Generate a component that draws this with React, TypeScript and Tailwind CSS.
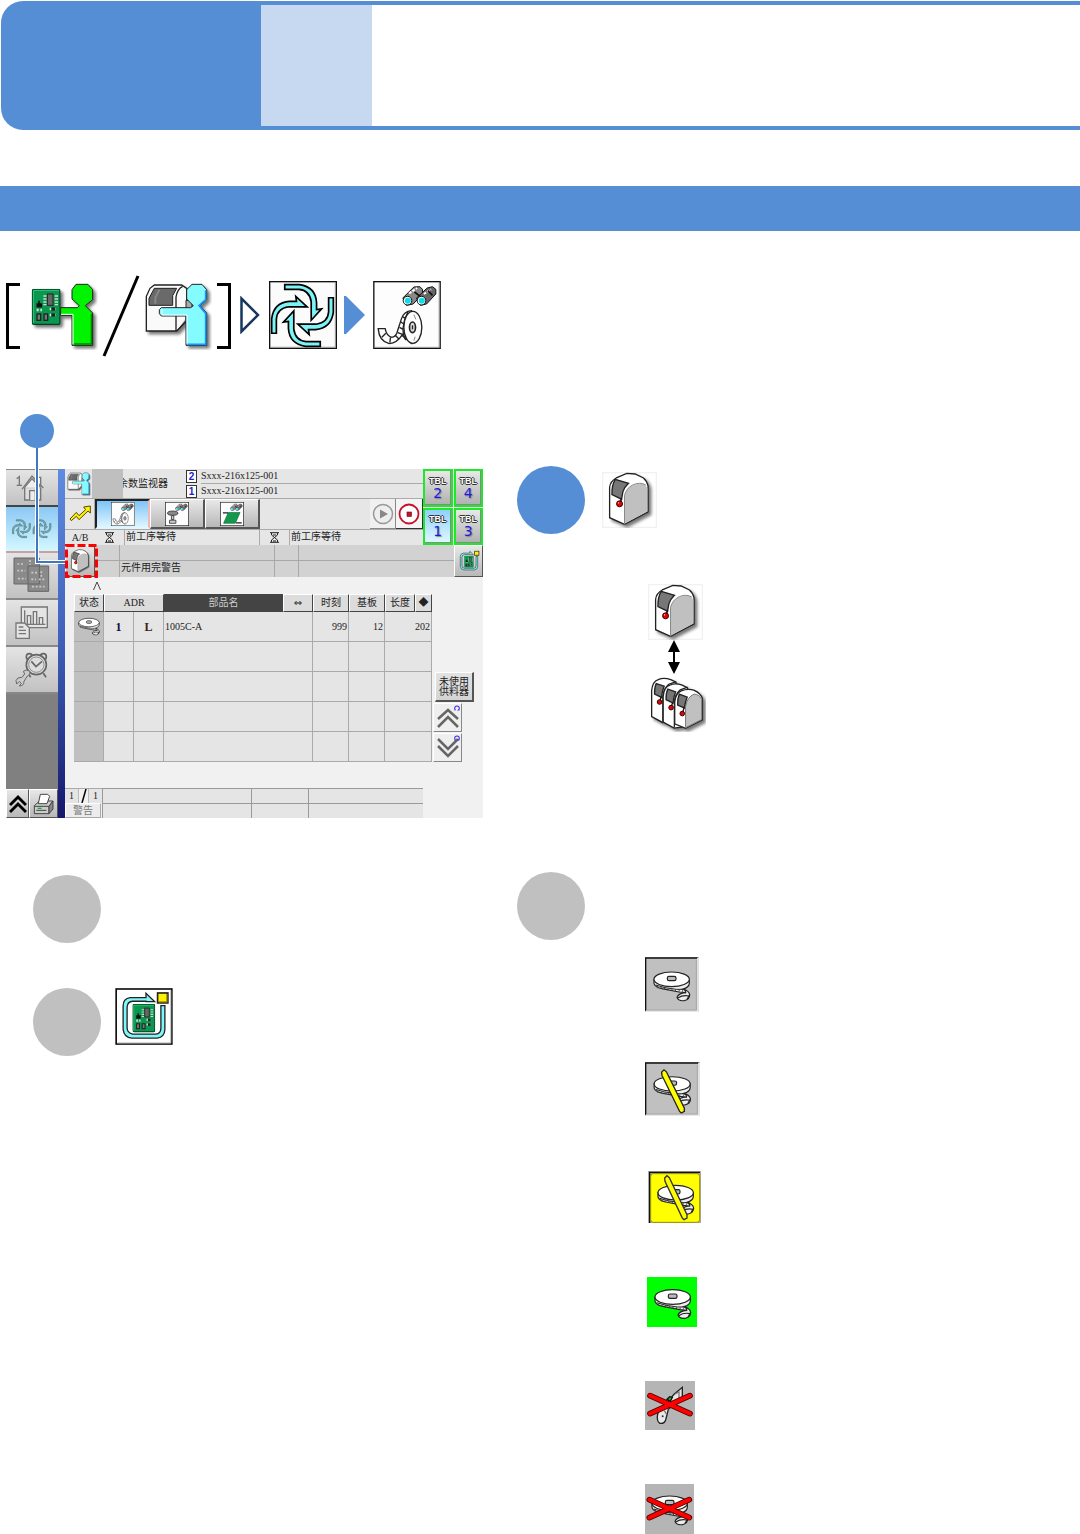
import type { ReactNode } from "react";

const bevel =
  "flex items-center justify-center border border-t-white border-l-white border-r-[#555] border-b-[#555] bg-gradient-to-b";
const bevelGray = `${bevel} from-[#e8e8e8] to-[#b8b8b8]`;
const softShadow = "[filter:drop-shadow(8px_8px_5px_#0008)]";

function Board({ x, y, w, h }: { x: number; y: number; w: number; h: number }) {
  return (
    <svg x={x} y={y} width={w} height={h} viewBox="0 0 87 109" preserveAspectRatio="none">
      <rect x="2" y="2" width="83" height="105" rx="5" fill="#0a9850" stroke="#024023" strokeWidth="4" />
      <path d="M5 104V5H82" fill="none" stroke="#34c67c" strokeWidth="3" />
      <path d="M35 22h44M35 31h44M35 40h44M35 48h44" stroke="#d5d5d5" strokeWidth="4" strokeDasharray="10 24" />
      <rect x="47" y="16" width="17" height="34" fill="#666" stroke="#222" strokeWidth="3" />
      <path d="M22 36v12M17 46h12v8H17z" stroke="#111" strokeWidth="5" fill="#111" />
      <path d="M15 64h16M54 61h22M54 79h22" stroke="#ddd" strokeWidth="8" strokeDasharray="6 5" />
      <rect x="59" y="56" width="11" height="10" fill="#222" />
      <rect x="59" y="74" width="11" height="10" fill="#222" />
      <rect x="16" y="76" width="11" height="19" fill="#777" stroke="#222" strokeWidth="4" />
      <rect x="37" y="76" width="11" height="19" fill="#777" stroke="#222" strokeWidth="4" />
    </svg>
  );
}

function BoardOperator({ className }: { className: string }) {
  return (
    <svg className={className} viewBox="90 55 204 204" aria-hidden="true">
      <g className={softShadow}>
        <Board x={95} y={75} w={87} h={109} />
        <path d="M228 62H264L278 78V108L256 126L278 148V245H216V155H182V132H232L238 126L216 106V78Z" fill="#00f400" stroke="#222" strokeWidth="3" />
        <path d="M219 242V152H183" fill="none" stroke="#fff" strokeWidth="3" />
        <path d="M274 150V241H222" fill="none" stroke="#008a00" strokeWidth="4" />
      </g>
    </svg>
  );
}

function MachineOperator({ className }: { className: string }) {
  return (
    <svg className={className} viewBox="432 55 204 204" aria-hidden="true">
      <g className={softShadow}>
        <path d="M439 202V98L450 74L463 64H545L560 74V172L530 202Z" fill="#fafafa" stroke="#222" strokeWidth="4" />
        <path d="M463 74H530L518 96V125H447V104Z" fill="#6a6a6a" stroke="#222" strokeWidth="3" />
        <path d="M478 78L466 102V120" fill="none" stroke="#888" strokeWidth="6" />
        <path d="M528 202V100Q532 76 548 68" fill="none" stroke="#222" strokeWidth="4" />
        <path d="M530 202L558 170V110H576V140" fill="#aaa" stroke="#222" strokeWidth="3" />
        <path d="M576 62H606L620 78V108L600 126L620 148V245H558V157H484L478 150V138L484 132H572L580 126L560 106V78Z" fill="#84fbff" stroke="#222" strokeWidth="3" />
      </g>
      <path d="M617 80V108L597 126L617 149V242H562" fill="none" stroke="#1595ff" strokeWidth="5" />
      <path d="M561 240V154H486V136" fill="none" stroke="#fff" strokeWidth="3" />
    </svg>
  );
}

const arrow = "M194 57H238Q286 64 289 110V131L304 129L273 163V108Q268 73 236 71H194Z";

function Swirl({ fill = "#7df3f5", stroke = "#000" }: { fill?: string; stroke?: string }) {
  return (
    <g fill={fill} stroke={stroke} strokeWidth="5">
      <path d={arrow} />
      <path d={arrow} transform="rotate(90 247 149)" />
      <path d={arrow} transform="rotate(180 247 149)" />
      <path d={arrow} transform="rotate(270 247 149)" />
    </g>
  );
}

function SwirlTile({ className }: { className: string }) {
  return (
    <svg className={className} viewBox="147 46 203 203" aria-hidden="true">
      <rect x="149" y="48" width="199" height="199" fill="#fbfbfb" stroke="#111" strokeWidth="4" />
      <path d="M152 244H345V51" fill="none" stroke="#999" strokeWidth="3" />
      <Swirl />
    </svg>
  );
}

function Binoculars() {
  return (
    <g stroke="#111" strokeWidth="3">
      <path d="M549 96L582 63L600 62L608 70V84L580 114L560 118Z" fill="#888" />
      <path d="M590 96L622 66L638 62L648 70V84L620 114L602 118Z" fill="#666" />
      <path d="M568 82L592 66M612 84L634 70" stroke="#fff" strokeWidth="6" strokeDasharray="8 4" />
      <path d="M584 78L602 92M624 74L638 88" strokeWidth="5" />
      <circle cx="563" cy="104" r="13" fill="#fff" />
      <circle cx="605" cy="104" r="13" fill="#fff" />
      <circle cx="564" cy="104" r="9" fill="#11dbe6" stroke="none" />
      <circle cx="606" cy="104" r="9" fill="#11dbe6" stroke="none" />
    </g>
  );
}

function ReelTile({ className }: { className: string }) {
  return (
    <svg className={className} viewBox="460 45 203 204" aria-hidden="true">
      <rect x="462" y="47" width="199" height="200" fill="#fdfdfd" stroke="#111" strokeWidth="4" />
      <path d="M465 244H658V50" fill="none" stroke="#999" strokeWidth="3" />
      <Binoculars />
      <path d="M575 134Q552 136 545 158L534 192Q530 212 516 214Q500 210 496 188H475Q478 226 508 233Q532 230 546 208L575 232Z" fill="#fff" stroke="#222" strokeWidth="4" />
      <path d="M564 138Q552 160 550 184T558 222M548 152L558 158M543 168L552 174M539 184L550 190M534 200L550 206M526 208L538 220M512 214L510 230M498 202L486 214" fill="none" stroke="#222" strokeWidth="4" />
      <ellipse cx="579" cy="184" rx="27" ry="48" fill="#fff" stroke="#222" strokeWidth="4" />
      <ellipse cx="578" cy="184" rx="9" ry="16" fill="#ddd" stroke="#222" strokeWidth="5" />
      <path d="M578 178v12" stroke="#222" strokeWidth="4" />
      <path d="M582 146l6 14M586 212l-4 12" stroke="#888" strokeWidth="3" />
    </svg>
  );
}

function NozzleTile({ className }: { className: string }) {
  return (
    <svg className={className} viewBox="460 45 203 204" aria-hidden="true">
      <rect x="462" y="47" width="199" height="200" fill="#fdfdfd" stroke="#111" strokeWidth="6" />
      <Binoculars />
      <ellipse cx="525" cy="140" rx="44" ry="18" fill="#888" stroke="#333" strokeWidth="7" />
      <path d="M514 160h20v34h-20zM498 200h54v26h-54z" fill="#ccc" stroke="#333" strokeWidth="7" />
    </svg>
  );
}

function BeltTile({ className }: { className: string }) {
  return (
    <svg className={className} viewBox="460 45 203 204" aria-hidden="true">
      <rect x="462" y="47" width="199" height="200" fill="#fdfdfd" stroke="#111" strokeWidth="6" />
      <Binoculars />
      <path d="M530 134H630L590 226H490Z" fill="#13984c" stroke="#085c2c" strokeWidth="5" />
      <path d="M484 138h44M596 222h48" stroke="#222" strokeWidth="10" />
    </svg>
  );
}

function Machine({ className, framed = false }: { className: string; framed?: boolean }) {
  return (
    <svg className={className} viewBox="275 38 166 169" aria-hidden="true">
      {framed && <rect x="277" y="40" width="162" height="165" fill="#fff" stroke="#f1f1f1" strokeWidth="4" />}
      <path className={softShadow} d="M298 176V84Q300 66 318 56L350 42L375 44L400 56Q410 64 414 80V158L343 196Z" fill="#fff" stroke="#222" strokeWidth="4" />
      <path d="M343 194V110Q348 86 368 78Q394 68 404 76L412 86V157Z" fill="#c0c0c0" />
      <path d="M343 196V108Q350 86 366 78Q390 66 408 78" fill="none" stroke="#888" strokeWidth="3" />
      <path d="M315 60L355 72Q342 84 338 98L334 120L305 106Q304 78 315 60Z" fill="#777" stroke="#222" strokeWidth="4" />
      <path d="M334 118l-4 12" stroke="#111" strokeWidth="5" />
      <circle cx="328" cy="134" r="9" fill="#e80000" stroke="#300" strokeWidth="3" />
      <circle cx="325" cy="131" r="2" fill="#fff" />
    </svg>
  );
}

function MachineLine({ className }: { className: string }) {
  const unit = (dx: number, dy: number) => (
    <g transform={`translate(${dx} ${dy})`}>
      <path d="M424 768V690Q426 662 444 656Q460 648 482 656L498 664L500 780L457 786Z" fill="#fff" stroke="#222" strokeWidth="4" />
      <path d="M458 784V708Q460 684 476 670L498 662" fill="none" stroke="#222" strokeWidth="4" />
      <path d="M438 668L462 676Q456 690 454 710L433 700Q432 680 438 668Z" fill="#777" stroke="#222" strokeWidth="4" />
      <path d="M453 708l-4 12" stroke="#111" strokeWidth="4" />
      <circle cx="448" cy="724" r="7" fill="#e80000" stroke="#300" strokeWidth="3" />
    </g>
  );
  return (
    <svg className={className} viewBox="420 645 168 170" aria-hidden="true">
      <g className={softShadow}>
        {unit(0, 0)}
        {unit(35, 17)}
        <path d="M494 790V724Q496 698 514 690Q534 682 552 688Q574 698 578 714V778L527 804Z" fill="#fff" stroke="#222" strokeWidth="4" />
      </g>
      <path d="M527 802V738Q532 708 553 700Q570 701 576 716V777Z" fill="#c0c0c0" stroke="#777" strokeWidth="3" />
      <path d="M508 700L532 709Q526 724 523 742L503 733Q502 714 508 700Z" fill="#777" stroke="#222" strokeWidth="4" />
      <path d="M522 742l-3 12" stroke="#111" strokeWidth="4" />
      <circle cx="517" cy="759" r="7" fill="#e80000" stroke="#300" strokeWidth="3" />
    </svg>
  );
}

// Reel lying flat, with the tape curling off to the lower right
function FlatReel() {
  return (
    <g stroke="#222" strokeWidth="3.5">
      <path d="M-53 0V13Q-50 24 -30 28L22 38L42 40Q20 42 16 54Q20 66 38 64Q54 60 54 46Q52 34 34 29Q52 24 53 12V0Z" fill="#eee" />
      <path d="M18 56Q34 46 52 50M36 30Q44 34 42 42M54 46L46 60" fill="none" />
      <path d="M-48 17L-20 25L14 30L36 30" fill="none" strokeWidth="3" />
      <path d="M-44 23L-20 28L14 34L34 35" fill="none" stroke="#444" strokeWidth="6" strokeDasharray="3 8" />
      <ellipse rx="53" ry="22" fill="#fff" />
      <rect x="-13" y="-9" width="26" height="13" rx="5" fill="#bbb" />
    </g>
  );
}

const slash = "M-31 -36L-24 -43L-17 -37L36 74L36 84L27 89L22 84L-30 -26Z";

function Cross() {
  return (
    <g>
      <path d="M-60 -26L60 28M60 -26L-60 28" stroke="#4a0000" strokeWidth="17" strokeLinecap="round" />
      <path d="M-60 -26L60 28M60 -26L-60 28" stroke="#f00" strokeWidth="12" strokeLinecap="round" />
    </g>
  );
}

function SunkenTile({ className, children }: { className: string; children: ReactNode }) {
  return (
    <svg className={className} viewBox="45 21 162 165" preserveAspectRatio="none" aria-hidden="true">
      <rect x="45" y="21" width="162" height="165" fill="#c0c0c0" />
      <path d="M47 183V24H203" fill="none" stroke="#111" strokeWidth="4" />
      <path d="M47 184H204V24" fill="none" stroke="#e8e8e8" strokeWidth="5" />
      <path d="M51 180H199V30" fill="none" stroke="#999" strokeWidth="2" />
      <g transform="translate(125 88)">{children}</g>
    </svg>
  );
}

function ReelStates() {
  return (
    <div className="mt-[17px] ml-[128px] flex flex-col items-start gap-[55px]">
      <div className="flex flex-col items-start gap-[50px]">
        <SunkenTile className="h-[55px] w-[54px]">
          <FlatReel />
        </SunkenTile>
        <SunkenTile className="h-[54px] w-[55px]">
          <FlatReel />
          <path d={slash} fill="#ff0" stroke="#222" strokeWidth="4" />
        </SunkenTile>
      </div>
      <div className="flex flex-col items-start gap-[54px]">
        <svg className="h-[52px] w-14" viewBox="45 663 168 156" aria-hidden="true">
          <rect x="54" y="663" width="159" height="156" fill="#aaa" />
          <path d="M59 819V667H210" fill="none" stroke="#111" strokeWidth="4" />
          <rect x="62" y="671" width="147" height="146" rx="8" fill="#ff0" stroke="#998f00" strokeWidth="3" />
          <g transform="translate(137 728)">
            <FlatReel />
            <path d={slash} fill="#ff0" stroke="#333" strokeWidth="4" transform="translate(-2 -8)" />
          </g>
        </svg>
        <svg className="h-[50px] w-[52px]" viewBox="45 51 156 150" aria-hidden="true">
          <rect x="51" y="51" width="150" height="150" fill="#0f0" />
          <g transform="translate(128 111)">
            <FlatReel />
          </g>
        </svg>
        <svg className="h-[49px] w-[50px]" viewBox="42 363 150 147" aria-hidden="true">
          <rect x="42" y="363" width="150" height="147" fill="#b5b5b5" />
          <path d="M154 382V414L112 448L104 480Q100 492 86 490Q76 482 80 462L84 454L130 402Z" fill="#e8e8e8" stroke="#222" strokeWidth="4" />
          <path d="M132 402L144 396V418M100 452L106 462" stroke="#777" strokeWidth="4" fill="none" />
          <path d="M108 418l8-8 8 2-6 12z" fill="#0b4" stroke="#111" strokeWidth="4" />
          <circle cx="95" cy="469" r="3" fill="#333" />
          <g transform="translate(117 433)">
            <Cross />
          </g>
        </svg>
        <svg className="h-[50px] w-[49px]" viewBox="45 672 147 150" aria-hidden="true">
          <rect x="45" y="672" width="147" height="150" fill="#b5b5b5" />
          <g transform="translate(119 730)">
            <FlatReel />
          </g>
          <g transform="translate(118 745)">
            <Cross />
          </g>
        </svg>
      </div>
    </div>
  );
}

function BoardLoop({ className, framed = false }: { className: string; framed?: boolean }) {
  return (
    <svg className={className} viewBox="285 380 174 172" aria-hidden="true">
      {framed && <rect x="288" y="383" width="168" height="166" fill="#fff" stroke="#111" strokeWidth="5" />}
      {framed && <path d="M292 546H453V387" fill="none" stroke="#aaa" strokeWidth="3" />}
      <path d="M378 409H330Q309 412 309 434V505Q312 530 335 531H412Q434 528 435 505V433H423V502Q422 518 408 519H338Q321 516 321 500V438Q322 421 338 420H378V421H404L378 396Z" fill="#7df7fa" stroke="#222" strokeWidth="4" />
      <Board x={337} y={428} w={69} h={86} />
      <rect x="413" y="395" width="31" height="30" fill="#fff200" stroke="#222" strokeWidth="5" />
      <path d="M417 422H441V398" fill="none" stroke="#a08c00" strokeWidth="4" />
    </svg>
  );
}

function Route() {
  return (
    <nav aria-label="Menu path" className="mt-11 flex h-[82px] items-center pl-[6px]">
      <svg className="h-[66px] w-[14px]" viewBox="0 0 14 66" aria-hidden="true">
        <path d="M14 1.500H1.500V64.500H14" fill="none" stroke="#000" strokeWidth="3" />
      </svg>
      <BoardOperator className="ml-[10px] h-[68px] w-[68px]" />
      <svg className="ml-1 h-[82px] w-[38px]" viewBox="0 0 38 82" aria-hidden="true">
        <path d="M36 1L2 81" stroke="#000" strokeWidth="3" />
      </svg>
      <MachineOperator className="ml-1 h-[68px] w-[68px]" />
      <svg className="ml-[5px] h-[66px] w-[14px]" viewBox="0 0 14 66" aria-hidden="true">
        <path d="M0 1.500H12.500V64.500H0" fill="none" stroke="#000" strokeWidth="3" />
      </svg>
      <div className="ml-[9px] flex items-center pb-[3px]">
        <svg className="h-[38px] w-5" viewBox="0 0 20 38" aria-hidden="true">
          <path d="M1.500 2.500V35.500L18 19Z" fill="#fff" stroke="#17375e" strokeWidth="2.500" />
        </svg>
        <SwirlTile className="ml-[9px] h-[68px] w-[68px]" />
        <svg className="ml-[7px] h-[38px] w-[22px]" viewBox="0 0 22 38" aria-hidden="true">
          <path d="M0 0H2L21 19L2 38H0Z" fill="#558ed5" />
        </svg>
        <ReelTile className="ml-[7px] h-[68px] w-[68px]" />
      </div>
    </nav>
  );
}

function Sidebar() {
  const item =
    "flex h-[47px] items-center justify-center border-b-2 border-b-[#888] bg-gradient-to-b from-[#e4e4e4] to-[#c2c2c2]";
  return (
    <div className="flex w-[52px] shrink-0 flex-col bg-[#808080]">
      <button type="button" aria-label="Home" className="flex h-9 items-center justify-center border-t border-[#888] bg-gradient-to-b from-[#e4e4e4] to-[#c2c2c2]">
        <svg className="h-8 w-[52px]" viewBox="18 198 156 96">
          <g fill="none" stroke="#777" strokeWidth="4">
            <path d="M50 218l8-6v26M50 238h16" />
            <path d="M66 250L96 210L130 246M74 244V282H122V244" fill="#ddd" />
            <path d="M74 244L96 218L122 244M89 282V254H106V282M114 228V214H122V238" fill="#eee" />
          </g>
        </svg>
      </button>
      <button type="button" aria-label="Production" className="flex h-12 items-center justify-center border-t-2 border-b-2 border-t-[#444] border-b-[#c9a0a0] bg-gradient-to-b from-[#8cc8f4] to-[#d4f8ff]">
        <svg className="h-6 w-11" viewBox="130 40 450 225">
          <Swirl fill="#6cb4ba" stroke="#47636b" />
          <g transform="translate(210 0)">
            <Swirl fill="#6cb4ba" stroke="#47636b" />
          </g>
        </svg>
      </button>
      <button type="button" aria-label="Boards" className={item}>
        <svg className="h-10 w-11" viewBox="30 50 132 120">
          <g fill="#8a8a8a" stroke="#666" strokeWidth="3">
            <path d="M42 56h76v78H42zM84 80h62v76H84z" />
          </g>
          <g fill="none" stroke="#c8c8c8" strokeWidth="5" strokeDasharray="6 5">
            <path d="M52 74h20M52 94h24M54 118h24M90 62v14M94 100h22M94 120h14M116 120h22M96 142h38M124 96v16" />
          </g>
        </svg>
      </button>
      <button type="button" aria-label="Reports" className={item}>
        <svg className="h-10 w-11" viewBox="30 190 132 120">
          <g fill="#e4e4e4" stroke="#777" strokeWidth="4">
            <path d="M64 202h78v62H64z" />
            <path d="M74 212v42h62M82 228h10v26H82zM100 216h10v38h-10zM118 234h10v20h-10z" />
            <path d="M48 250h26l14 14v32H48zM56 262h14M56 272h22M56 282h22" />
          </g>
        </svg>
      </button>
      <button type="button" aria-label="Maintenance" className={item}>
        <svg className="h-10 w-11" viewBox="30 332 132 120">
          <g fill="#ddd" stroke="#666" strokeWidth="5">
            <path d="M84 402L92 414M130 402L138 414" />
            <circle cx="88" cy="352" r="9" />
            <circle cx="130" cy="352" r="9" />
            <circle cx="109" cy="376" r="30" />
            <circle cx="109" cy="376" r="23" strokeWidth="2" />
            <path d="M94 366L108 382L126 366" fill="none" />
            <path d="M90 396Q78 388 70 396L74 404L66 414L54 416Q44 422 50 434L58 426L64 432L58 440Q72 440 72 426L82 410Q92 408 90 396Z" fill="#ccc" strokeWidth="3" />
          </g>
        </svg>
      </button>
      <div className="mt-auto flex h-[29px]">
        <button type="button" aria-label="Scroll up" className={`${bevelGray} w-[23px]`}>
          <svg className="h-5 w-[18px]" viewBox="0 0 18 20">
            <path d="M1 11L9 3L17 11M1 18L9 10L17 18" fill="none" stroke="#000" strokeWidth="3" />
          </svg>
        </button>
        <button type="button" aria-label="Print" className={`${bevelGray} flex-1`}>
          <svg className="h-[22px] w-[22px]" viewBox="98 760 66 66">
            <g stroke="#444" strokeWidth="3">
              <path d="M102 798L118 784H158L146 800V822H102Z" fill="#ccc" />
              <path d="M146 822L158 808V784L146 800Z" fill="#888" />
              <path d="M114 792L120 764H142L148 770L140 792Z" fill="#fff" />
              <path d="M102 800H146M108 812H138" />
            </g>
            <path d="M112 806h12" stroke="#2a4" strokeWidth="4" />
          </svg>
        </button>
      </div>
    </div>
  );
}

function TableButton({ n, active = false }: { n: number; active?: boolean }) {
  return (
    <button
      type="button"
      className={`flex flex-col items-center justify-center border-2 border-[#1fe82a] font-['DejaVu_Sans',sans-serif] shadow-[inset_-1px_-1px_0_#888] ${
        active ? "bg-gradient-to-b from-[#8fd0fb] to-[#e0f8ff]" : "bg-gradient-to-b from-[#e8e8e8] to-[#b0b0b0]"
      }`}
    >
      <span className="font-['Liberation_Sans',sans-serif] text-[9px] leading-[10px] font-bold text-white [text-shadow:1px_0_#333,-1px_0_#333,0_1px_#333,0_-1px_#333]">TBL</span>
      <span className="text-sm leading-[14px] text-[#1c1cd8] [text-shadow:1px_1px_1px_#888]">{n}</span>
    </button>
  );
}

function Hourglass() {
  return (
    <svg className="h-[11px] w-[9px]" viewBox="0 0 9 11" aria-hidden="true">
      <path d="M0 .7H9M0 10.300H9M1.500 1V3L4.500 5.500L7.500 3V1M1.500 10V8L4.500 5.500L7.500 8V10M3 9h3M3 3h3" fill="none" stroke="#222" />
    </svg>
  );
}

const programs = [
  { lane: 2, name: "Sxxx-216x125-001" },
  { lane: 1, name: "Sxxx-216x125-001" },
];

function PanelTop() {
  return (
    <div className="flex">
      <div className="min-w-0 flex-1">
        <div className="flex h-[30px] border-b border-[#aaa]">
          <div className="flex w-[27px] items-center justify-center">
            <MachineOperator className="h-6 w-6" />
          </div>
          <div className="relative z-10 w-[31px] bg-[#bfbfbf]" />
          <h2 className="-ml-[5px] flex w-[68px] items-center">余数监视器</h2>
          <ul className="flex-1">
            {programs.map((p) => (
              <li key={p.lane} className="flex h-[15px] items-center gap-1">
                <span className="flex h-[13px] w-[11px] items-center justify-center border border-[#333] bg-white font-['Liberation_Sans',sans-serif] font-bold text-[#2020c8]">{p.lane}</span>
                <span className="h-[15px] flex-1 border-b border-[#aaa] leading-[14px]">{p.name}</span>
              </li>
            ))}
          </ul>
        </div>
        <div className="flex h-[30px]">
          <div className="flex w-[30px] items-center justify-center border-r border-[#aaa]">
            <svg className="h-5 w-[22px]" viewBox="206 300 66 54" aria-hidden="true">
              <path d="M209 342L228 322L236 332L256 314L250 306L270 303V324L263 318L236 344L228 334L213 347Z" fill="#fff200" stroke="#554a00" strokeWidth="3" />
            </svg>
          </div>
          <button type="button" aria-label="Reel components" className="flex w-[55px] items-center justify-center border-2 border-t-[#222] border-l-[#222] border-r-[#f0b8b8] border-b-[#dff6ff] bg-gradient-to-b from-[#7cc4f8] to-[#dff6ff]">
            <ReelTile className="h-6 w-6" />
          </button>
          <button type="button" aria-label="Nozzles" className={`${bevelGray} w-[55px] border-r-2 border-b-2`}>
            <NozzleTile className="h-6 w-6" />
          </button>
          <button type="button" aria-label="Conveyor" className={`${bevelGray} w-[55px] border-r-2 border-b-2`}>
            <BeltTile className="h-6 w-6" />
          </button>
          <button type="button" aria-label="Start" className="ml-auto flex w-[26px] items-center justify-center border-r border-b border-[#888] bg-[#f0f0f0]">
            <svg className="h-[22px] w-[22px]" viewBox="0 0 22 22">
              <circle cx="11" cy="11" r="9.500" fill="#eee" stroke="#999" strokeWidth="1.500" />
              <path d="M8 6.500V15.500L16 11Z" fill="#888" />
            </svg>
          </button>
          <button type="button" aria-label="Stop" className="flex w-[27px] items-center justify-center border-r border-b border-[#333] bg-[#f4f4f4]">
            <svg className="h-[22px] w-[22px]" viewBox="0 0 22 22">
              <circle cx="11" cy="11" r="9.500" fill="#fff" stroke="#c8102e" strokeWidth="1.800" />
              <rect x="9" y="9" width="4.500" height="4.500" fill="#c8102e" stroke="#511" strokeWidth=".6" />
            </svg>
          </button>
        </div>
        <div className="flex h-4 items-center border-t border-[#aaa]">
          <span className="w-[30px] text-center">A/B</span>
          <span className="flex w-[29px] justify-center">
            <Hourglass />
          </span>
          <span className="h-[15px] w-[136px] border-r border-l border-[#aaa] pl-px leading-[14px]">前工序等待</span>
          <span className="flex w-[29px] justify-center">
            <Hourglass />
          </span>
          <span className="h-[15px] flex-1 border-l border-[#aaa] pl-px leading-[14px]">前工序等待</span>
        </div>
      </div>
      <div className="grid w-[60px] grid-cols-2 grid-rows-2 gap-px">
        <TableButton n={2} />
        <TableButton n={4} />
        <TableButton n={1} active />
        <TableButton n={3} />
      </div>
    </div>
  );
}

function AlertRow() {
  const cell = "border-r border-[#a8a8a8]";
  return (
    <div className="flex h-8">
      <button type="button" aria-label="Switch machine display" className={`${bevelGray} w-[30px]`}>
        <Machine className="h-6 w-6" />
      </button>
      <div className="grid flex-1 grid-cols-[25px_155px_24px_1fr] grid-rows-2 bg-[#d2d2d2]">
        <span className={`${cell} border-b`} />
        <span className={`${cell} border-b`} />
        <span className={`${cell} border-b`} />
        <span className="border-b border-[#a8a8a8]" />
        <span className={cell} />
        <span className={`${cell} pl-px leading-[14px]`}>元件用完警告</span>
        <span className={cell} />
        <span />
      </div>
      <button type="button" aria-label="Board flow" className={`${bevelGray} w-[29px]`}>
        <BoardLoop className="h-6 w-6" />
      </button>
    </div>
  );
}

function PartsTable() {
  const th = "border border-t-white border-l-white border-r-[#444] border-b-[#444] bg-[#dcdcdc] p-0 font-normal";
  const td = "border-r border-b border-[#aaa] bg-[#e5e5e5] p-0";
  return (
    <table className="w-[358px] table-fixed border-separate border-spacing-0">
      <colgroup>
        <col className="w-[30px]" />
        <col className="w-[30px]" />
        <col className="w-[30px]" />
        <col className="w-[119px]" />
        <col className="w-[30px]" />
        <col className="w-9" />
        <col className="w-9" />
        <col className="w-[30px]" />
        <col className="w-[17px]" />
      </colgroup>
      <thead>
        <tr className="h-[18px] leading-[14px]">
          <th className={th}>状态</th>
          <th className={th} colSpan={2}>ADR</th>
          <th className="bg-[#444] p-0 font-normal text-[#ccc]">部品名</th>
          <th className={`${th} font-['DejaVu_Sans',sans-serif]`}>⇔</th>
          <th className={th}>时刻</th>
          <th className={th}>基板</th>
          <th className={th}>长度</th>
          <th className={th}>◆</th>
        </tr>
      </thead>
      <tbody>
        {[0, 1, 2, 3, 4].map((row) => (
          <tr key={row} className="h-[30px]">
            <td className="border-r border-b border-r-[#aaa] border-b-[#aaa] bg-[#c0c0c0] p-0">
              {row === 0 && (
                <svg className="mx-auto h-6 w-6" viewBox="-62 -32 124 110">
                  <FlatReel />
                </svg>
              )}
            </td>
            <td className={`${td} text-center text-xs font-bold text-[#101040]`}>{row === 0 && "1"}</td>
            <td className={`${td} text-center text-xs font-bold text-[#402020]`}>{row === 0 && "L"}</td>
            <td className={`${td} pl-px`} colSpan={2}>{row === 0 && "1005C-A"}</td>
            <td className={`${td} pr-px text-right`}>{row === 0 && "999"}</td>
            <td className={`${td} pr-px text-right`}>{row === 0 && "12"}</td>
            <td className={`${td} pr-px text-right`} colSpan={2}>{row === 0 && "202"}</td>
          </tr>
        ))}
      </tbody>
    </table>
  );
}

function PageButton({ down = false }: { down?: boolean }) {
  return (
    <button type="button" aria-label={down ? "Next page" : "Previous page"} className="h-[29px] w-[29px] border border-t-white border-l-white border-r-[#888] border-b-[#888] bg-[#efefef]">
      <svg className="h-[27px] w-[27px]" viewBox="0 0 27 27">
        <path
          d={down ? "M4 5L14 15L24 5M4 12L14 22L24 12" : "M4 15L14 6L24 15M4 23L14 13L24 23"}
          fill="none"
          stroke="#666"
          strokeWidth="2.500"
        />
        <path d="M21.500 6H20.500M21.500 6A2.300 2.300 0 1 1 24.500 6H25.500" fill="none" stroke="#3a2ae0" strokeWidth="1.100" />
      </svg>
    </button>
  );
}

function PanelFooter() {
  return (
    <div className="flex h-[30px]">
      <div className="w-[37px]">
        <div className="flex h-[15px] items-center justify-between border-t border-[#aaa]">
          <span className="h-[14px] w-[14px] border-r border-[#bbb] bg-[#e5e5e5] text-center">1</span>
          <svg className="h-[14px] w-[6px]" viewBox="0 0 6 14" aria-hidden="true">
            <path d="M5 0L1 14" stroke="#000" strokeWidth="1.500" />
          </svg>
          <span className="h-[14px] w-[14px] border-l border-[#bbb] bg-[#e5e5e5] text-center">1</span>
        </div>
        <button type="button" className="h-[15px] w-9 border border-t-white border-l-white border-r-[#aaa] border-b-[#aaa] bg-[#ececec] leading-[13px] text-[#777]">警告</button>
      </div>
      <div className="mr-[60px] grid flex-1 grid-cols-[149px_57px_1fr] grid-rows-2">
        {[0, 1, 2, 3, 4, 5].map((i) => (
          <span key={i} className="border-t border-l border-[#999] bg-[#e5e5e5]" />
        ))}
      </div>
    </div>
  );
}

function MonitorPanel() {
  return (
    <div className="ml-[6px] flex w-[477px] font-['Liberation_Serif','Noto_Sans_CJK_SC',serif] text-[10px] leading-[14px] text-[#222]">
      <Sidebar />
      <div className="w-[7px] shrink-0 bg-gradient-to-b from-[#5f8be0] via-[#4060b8] to-[#16166c]" />
      <div className="flex min-w-0 flex-1 flex-col bg-[#e6e6e6]">
        <PanelTop />
        <AlertRow />
        <div className="bg-[#f1f1f1] pb-[26px] pl-[9px]">
          <div className="h-[17px] pt-1 pl-[19px]">
            <svg className="h-[9px] w-2" viewBox="0 0 8 9" aria-hidden="true">
              <path d="M.5 9L4 1L7.500 9" fill="none" stroke="#444" />
            </svg>
          </div>
          <div className="flex gap-px">
            <PartsTable />
            <div className="flex flex-col justify-end gap-px">
              <button type="button" className={`${bevel} from-[#e2e2e2] to-[#d4d4d4] ml-[2px] h-[30px] w-[39px] border-r-2 border-b-2 leading-[10px]`}>
                未使用
                <br />
                供料器
              </button>
              <PageButton />
              <PageButton down />
            </div>
          </div>
        </div>
        <div className="bg-[#f1f1f1]">
          <PanelFooter />
        </div>
      </div>
    </div>
  );
}

// Marker circle, leader line and dashed frame drawn over the panel
function Callout() {
  return (
    <svg className="pointer-events-none absolute top-0 left-[20px] z-20 h-[166px] w-20" viewBox="0 0 80 166" aria-hidden="true">
      <path d="M17 55V148H46" fill="none" stroke="#fff" strokeWidth="4" />
      <path d="M17 34V148H46" fill="none" stroke="#3f78bd" strokeWidth="2" />
      <circle cx="17" cy="17" r="17" fill="#558ed5" />
      <rect x="46.500" y="131.500" width="30" height="31" fill="none" stroke="#f00" strokeWidth="3" strokeDasharray="8 3" />
    </svg>
  );
}

export default function App() {
  return (
    <div className="bg-white pt-px font-['Liberation_Sans',sans-serif]">
      <header className="flex h-[129px] pl-px">
        <div className="w-[260px] shrink-0 rounded-l-[22px] bg-[#558ed5]" />
        <div className="flex flex-1 border-y-4 border-[#558ed5]">
          <div className="w-[111px] bg-[#c6d9f1]" />
        </div>
      </header>
      <div className="mt-14 h-[45px] bg-[#558ed5]" />
      <Route />
      <main className="mt-[57px] grid grid-cols-[517px_1fr]">
        <div>
          <section className="relative pt-[55px]">
            <Callout />
            <MonitorPanel />
          </section>
          <section className="mt-[57px] flex flex-col gap-[45px] pl-[33px]">
            <div className="h-[68px] w-[68px] rounded-full bg-[#c0c0c0]" />
            <div className="flex items-start gap-[14px]">
              <div className="h-[68px] w-[68px] rounded-full bg-[#c0c0c0]" />
              <BoardLoop framed className="h-[57px] w-[58px]" />
            </div>
          </section>
        </div>
        <div className="pt-[52px]">
          <section>
            <div className="flex items-center gap-[17px]">
              <div className="h-[68px] w-[68px] rounded-full bg-[#558ed5]" />
              <Machine framed className="h-14 w-[55px]" />
            </div>
            <div className="mt-[50px] ml-[131px] flex w-[58px] flex-col">
              <Machine framed className="h-14 w-[55px]" />
              <svg className="h-[34px] w-[52px]" viewBox="0 0 52 34" aria-hidden="true">
                <path d="M26 8V26" stroke="#000" strokeWidth="2" />
                <path d="M26 0L20 12H32ZM26 34L20 22H32Z" />
              </svg>
              <MachineLine className="mt-[2px] ml-[2px] h-14 w-14" />
            </div>
          </section>
          <section className="mt-[140px]">
            <div className="h-[68px] w-[68px] rounded-full bg-[#c0c0c0]" />
            <ReelStates />
          </section>
        </div>
      </main>
    </div>
  );
}
